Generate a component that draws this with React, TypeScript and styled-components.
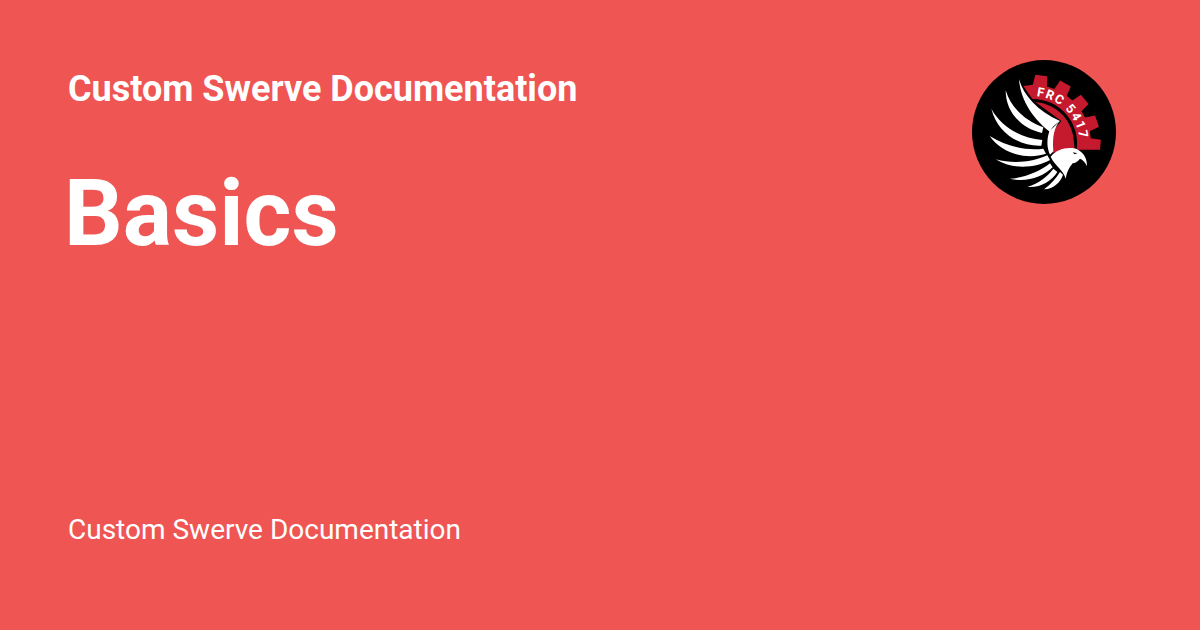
import React from "react";
import styled, { createGlobalStyle } from "styled-components";

const Global = createGlobalStyle`
  html, body { margin: 0; padding: 0; background: #ef5552; }
  #root { width: 1200px; height: 630px; overflow: hidden; }
`;

const Card = styled.main`
  box-sizing: border-box;
  width: 1200px;
  height: 630px;
  padding: 60px 84px 82px 68px;
  background: #ef5552;
  color: #fff;
  font-family: Roboto, "Liberation Sans", sans-serif;
  display: flex;
  flex-direction: column;
`;

const Header = styled.header`
  display: flex;
  justify-content: space-between;
  align-items: flex-start;
`;

const Titles = styled.div`
  display: flex;
  flex-direction: column;
`;

const SiteName = styled.div`
  font-size: 36px;
  font-weight: 700;
  line-height: 58px;
`;

const PageTitle = styled.h1`
  margin: 41px 0 0 -4px;
  font-size: 92px;
  font-weight: 700;
  line-height: 110px;
`;

const Description = styled.footer`
  margin-top: auto;
  font-size: 28px;
  font-weight: 400;
  line-height: 36px;
`;

const LogoSvg = styled.svg`
  width: 144px;
  height: 144px;
  flex: none;
  display: block;
`;

const GearText = styled.text`
  font-family: Roboto, "Liberation Sans", sans-serif;
  font-weight: 700;
  font-size: 38px;
  letter-spacing: 4px;
  fill: #fff;
`;

const CX = 205;
const CY = 272;

function pt(r: number, deg: number) {
  const a = ((deg - 90) * Math.PI) / 180;
  return `${(CX + r * Math.cos(a)).toFixed(1)} ${(CY + r * Math.sin(a)).toFixed(1)}`;
}

function gearPath() {
  const teeth = [7.5, 29, 50, 71];
  const r0 = 176;
  const r1 = 206;
  let d = `M178 100 `;
  for (const t of teeth) {
    d += `L${pt(r0, t - 7)} L${pt(r1, t - 5)} L${pt(r1, t + 5)} L${pt(r0, t + 7)} `;
  }
  d += `L${pt(r0, 85)} L${pt(r1, 87)} L408 291 L338 291 A133 133 0 0 0 ${pt(133, 0)} Z`;
  return d;
}

const featherOutlines = [
  "M165 80C180 130 220 175 288 205C272 216 262 226 258 238C215 205 170 150 165 80Z",
  "M125 113C140 165 185 205 238 224L234 241C180 230 125 185 125 113Z",
  "M82 168C110 220 165 255 235 262L232 279C165 282 100 240 82 168Z",
  "M77 250C125 280 185 295 238 288L246 303C190 322 115 305 77 250Z",
  "M95 320C150 335 205 328 250 308L258 322C215 346 145 352 95 320Z",
  "M137 378C185 375 230 355 258 332L266 344C235 375 185 390 137 378Z",
  "M190 403C225 392 250 372 268 348L280 358C262 386 230 406 190 403Z",
  "M240 410C260 395 276 378 288 358L297 366C290 388 270 408 240 410Z",
];

function Logo() {
  return (
    <LogoSvg viewBox="24 22 432 432" role="img" aria-label="FRC 5417">
      <circle cx="240" cy="238" r="216" fill="#000" />
      <path d={gearPath()} fill="#c5192d" />
      <path d="M214 148A125 125 0 0 1 330 272L332 292L262 300L262 240L292 205Z" fill="#c5192d" />
      <defs>
        <path id="gearArc" d={`M${pt(142, 5)}A142 142 0 0 1 ${pt(142, 92)}`} />
      </defs>
      <GearText>
        <textPath href="#gearArc">FRC 5417</textPath>
      </GearText>
      {featherOutlines.map((d) => (
        <path key={d} d={d} fill="#fff" />
      ))}
      <path d="M288 205C272 222 264 250 268 296L258 306C248 285 248 260 256 236Z" fill="#fff" />
      <path
        d="M260 312C275 292 305 282 330 287C352 292 370 312 369 341C364 330 358 322 348 318C342 326 334 331 326 332C314 346 308 360 305 378C298 350 272 340 260 312Z"
        fill="#fff"
      />
      <path d="M326 299L340 302L332 305Z" fill="#000" />
    </LogoSvg>
  );
}

export default function App() {
  return (
    <>
      <Global />
      <Card>
        <Header>
          <Titles>
            <SiteName>Custom Swerve Documentation</SiteName>
            <PageTitle>Basics</PageTitle>
          </Titles>
          <Logo />
        </Header>
        <Description>Custom Swerve Documentation</Description>
      </Card>
    </>
  );
}
